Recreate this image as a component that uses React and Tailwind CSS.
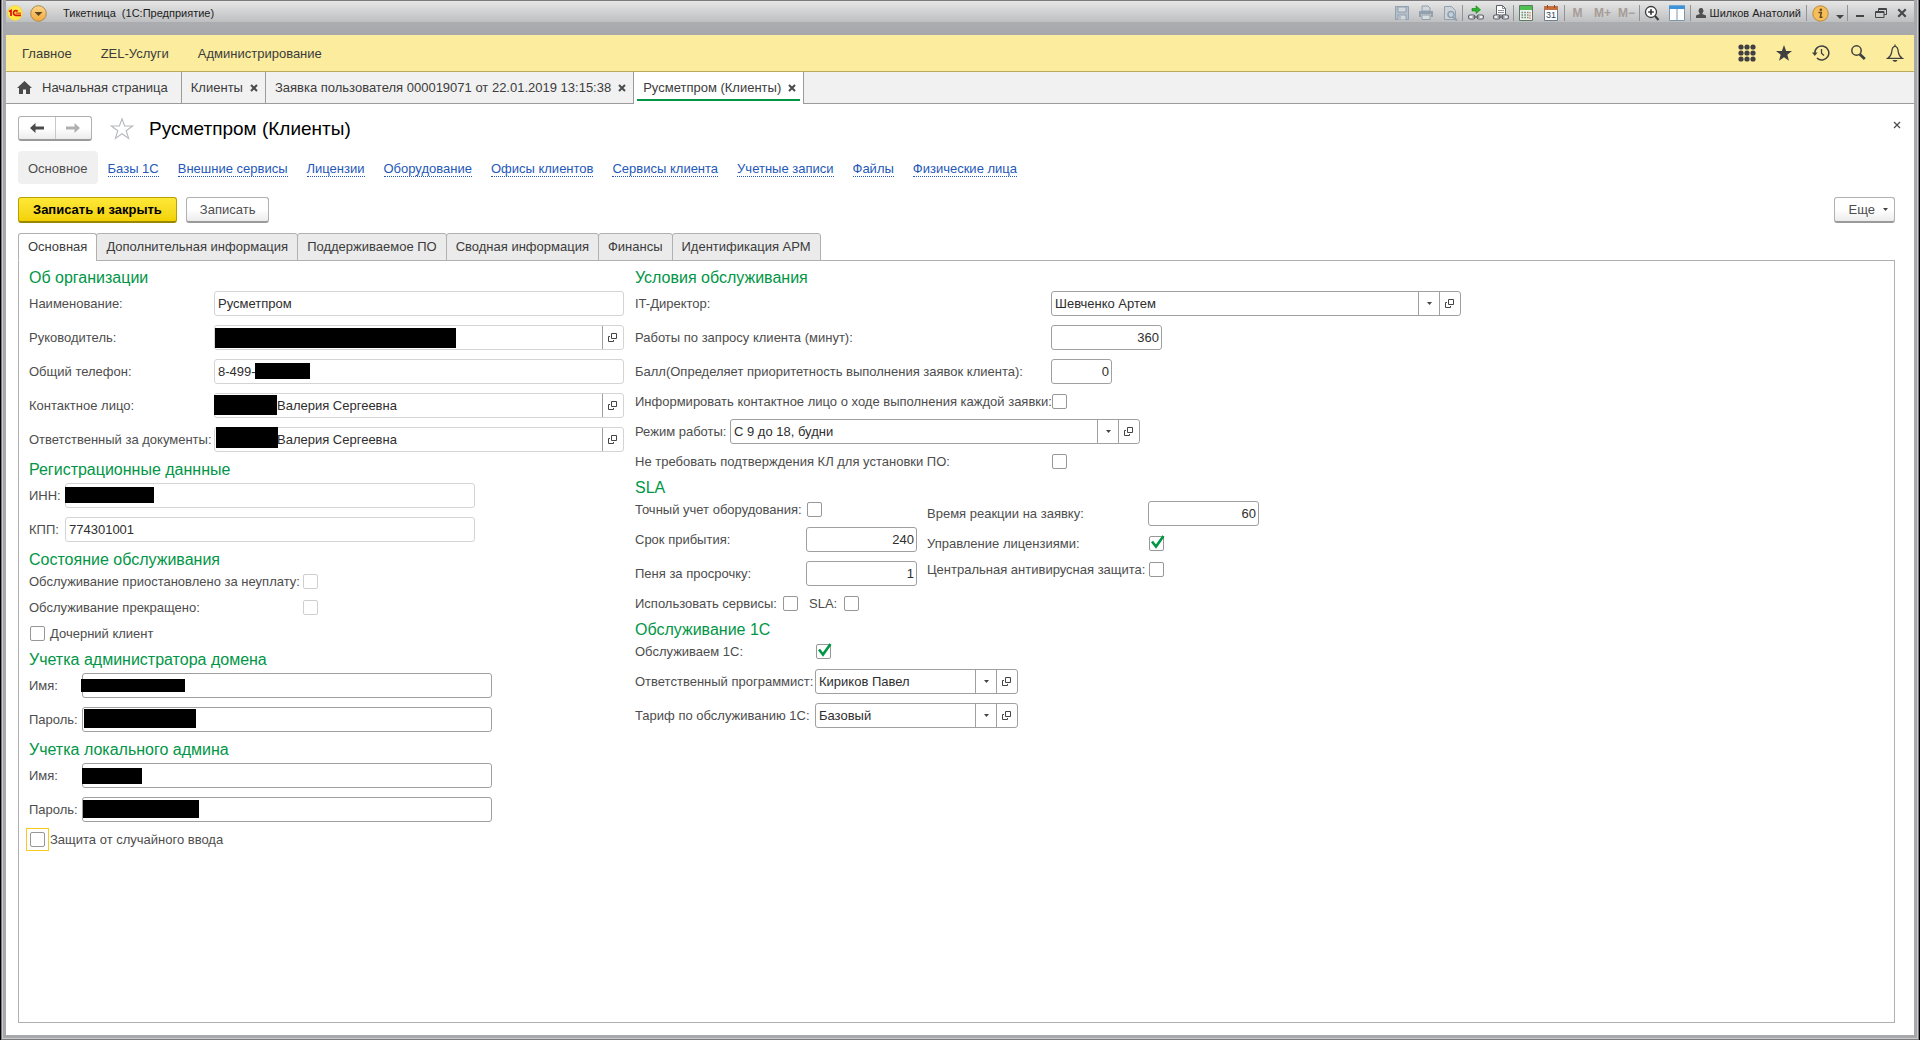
import React, { useState } from 'react';

const menuItems = ['Главное', 'ZEL-Услуги', 'Администрирование'];

const navLinks = [
    'Базы 1С', 'Внешние сервисы', 'Лицензии', 'Оборудование', 'Офисы клиентов',
    'Сервисы клиента', 'Учетные записи', 'Файлы', 'Физические лица',
];

const formTabs = [
    'Основная', 'Дополнительная информация', 'Поддерживаемое ПО',
    'Сводная информация', 'Финансы', 'Идентификация АРМ',
];

/* ---------- Icons ---------- */

const CloseIcon = ({ className = 'size-2', width = 2 }) => (
    <svg viewBox="0 0 8 8" className={className} fill="none" stroke="#4a4a4a" strokeWidth={width}>
        <path d="M1 1l6 6M7 1l-6 6" />
    </svg>
);

const CaretIcon = () => (
    <svg viewBox="0 0 5 3" className="h-[3px] w-[5px]" fill="#444"><path d="M0 0h5L2.5 3z" /></svg>
);

const OpenIcon = () => (
    <svg viewBox="0 0 10 10" className="size-[10px]" fill="none" stroke="#444">
        <path d="M3.500 .5h5v5h-5z" />
        <path d="M2 3.500H.5v5h5V7" />
    </svg>
);

const HomeIcon = () => (
    <svg viewBox="0 0 15 13" className="h-[13px] w-[15px]" fill="#4a4a4a">
        <path d="M7.500 0L15 7h-2v6H9V8.500H6V13H2V7H0z" />
    </svg>
);

const ArrowIcon = ({ flip, color }) => (
    <svg viewBox="0 0 14 10" className="h-[10px] w-[14px]" fill={color}>
        {flip ? <path d="M14 5L8.500 0v3.500H0v3h8.500V10z" /> : <path d="M0 5l5.500-5v3.500H14v3H5.500V10z" />}
    </svg>
);

const StarOutline = () => (
    <svg viewBox="0 0 24 24" className="size-6" fill="#fff" stroke="#b4b9be" strokeWidth="1.1">
        <path d="M12 1.800l2.600 7.200h8l-6.400 4.700 2.400 7.700L12 16.700l-6.600 4.700 2.400-7.700L1.400 9h8z" />
    </svg>
);

const LogoIcon = () => (
    <svg viewBox="0 0 16 16" className="size-4">
        <circle cx="8" cy="8" r="7.500" fill="#ffe94a" stroke="#e9c84a" strokeWidth=".6" />
        <g fill="none" stroke="#d8150f" strokeWidth="1.700">
            <path d="M2 6.600L4 5.500V11" />
            <path d="M10.600 6.600A2.300 2.300 0 1 0 8.800 10.300H14" />
            <path d="M8.600 8.100H14" strokeWidth="1" />
        </g>
    </svg>
);

const MenuCircleIcon = () => (
    <svg viewBox="0 0 17 17" className="size-[17px]">
        <defs>
            <linearGradient id="orange" x2="0" y2="1">
                <stop stopColor="#fbd68a" /><stop offset="1" stopColor="#f3a83c" />
            </linearGradient>
        </defs>
        <circle cx="8.500" cy="8.500" r="7.800" fill="url(#orange)" stroke="#a98a52" />
        <path d="M4.500 7h8l-4 4z" fill="#5a4420" />
    </svg>
);

const SaveIcon = () => (
    <svg viewBox="0 0 16 16" className="size-4" fill="none" stroke="#93a0ad">
        <path d="M1.500 1.500h13v13h-13z" fill="#b3bfca" />
        <path d="M4 2h8v5H4zM4 14.500V10h8v4.500M6 11v3" fill="#d3d8dd" />
    </svg>
);

const PrinterIcon = () => (
    <svg viewBox="0 0 16 16" className="size-4" fill="#93a0ad">
        <path d="M4 1h6l2 2v3H4z" fill="#d3d8dd" stroke="#93a0ad" />
        <path d="M1 6h14v6h-2V9H3v3H1z" />
        <path d="M4 10h8v4.500H4z" fill="#dadde0" stroke="#93a0ad" />
    </svg>
);

const PreviewIcon = () => (
    <svg viewBox="0 0 16 16" className="size-4" fill="none" stroke="#93a0ad">
        <path d="M2.500 1.500h7l4 4v9h-11z" fill="#cdd3d8" />
        <circle cx="9" cy="9.500" r="3" strokeWidth="1.600" fill="#c2d3e0" />
        <path d="M11 12l4 3.500" strokeWidth="2" />
    </svg>
);

const ChainShape = () => (
    <g fill="#eee" stroke="#5a6068" strokeWidth="1.200">
        <rect x=".6" y="10" width="6.200" height="4" rx="1.500" />
        <rect x="9.200" y="10" width="6.200" height="4" rx="1.500" />
        <path d="M4.500 12h7" />
    </g>
);

const LinkGoIcon = () => (
    <svg viewBox="0 0 16 16" className="size-4">
        <ChainShape />
        <path d="M4 3.500h4V.8l4.500 4L8 8.500V6H4z" fill="#2cb32c" stroke="#128012" strokeWidth=".6" />
    </svg>
);

const LinkPageIcon = () => (
    <svg viewBox="0 0 16 16" className="size-4">
        <path d="M3.500 .5h6l3 3v6.500h-9z" fill="#fff" stroke="#5a6068" />
        <path d="M9.500 .5v3h3M5 5.500h6M5 7.500h6" fill="none" stroke="#5a6068" strokeWidth=".7" />
        <ChainShape />
    </svg>
);

const CalcIcon = () => (
    <svg viewBox="0 0 14 16" className="h-4 w-[14px]">
        <path d="M.5 .5h13v15H.5z" fill="#eef3ee" stroke="#5d7a62" />
        <path d="M1 1h12v4H1z" fill="#4fc04f" />
        <g stroke="#6c8a70" strokeWidth="1.400" strokeDasharray="1.600 1.200">
            <path d="M2.500 7.500h7M2.500 10h7M2.500 12.500h7" />
        </g>
        <path d="M11 7v7" stroke="#e08070" strokeWidth="1.400" strokeDasharray="1.600 1.200" />
    </svg>
);

const CalendarIcon = () => (
    <svg viewBox="0 0 14 16" className="h-4 w-[14px]">
        <path d="M.5 1.500h13v14H.5z" fill="#fff" stroke="#6d7f92" />
        <path d="M0 1h14v4H0z" fill="#c46f3f" />
        <path d="M3.500 0v3M10.500 0v3" stroke="#8a4a28" />
        <text x="7" y="13" fontSize="9" textAnchor="middle" fill="#33475c" className="font-['Liberation_Sans']">31</text>
    </svg>
);

const ZoomIcon = () => (
    <svg viewBox="0 0 16 16" className="size-4" fill="none" stroke="#3c3c3c">
        <circle cx="7" cy="7" r="5.500" fill="#fff" strokeWidth="1.300" />
        <path d="M4.200 7h5.600M7 4.200v5.600" strokeWidth="1.700" />
        <path d="M11 11l3.500 4" strokeWidth="2" />
    </svg>
);

const PanelsIcon = () => (
    <svg viewBox="0 0 16 16" className="size-4">
        <path d="M.5 1h15v14.500H.5z" fill="#fff" stroke="#7c96ad" />
        <path d="M0 .5h16V4H0z" fill="#3e92d8" />
        <path d="M8 4v11.500" stroke="#7c96ad" />
    </svg>
);

const UserIcon = () => (
    <svg viewBox="0 0 10 10" className="size-[10px]" fill="#505050">
        <path d="M5 0a2.300 2.800 0 0 1 1.300 5.200v.8L10 7.500V10H0V7.500L3.700 6v-.8A2.300 2.800 0 0 1 5 0z" />
    </svg>
);

const InfoIcon = () => (
    <svg viewBox="0 0 17 17" className="size-[17px]">
        <circle cx="8.500" cy="8.500" r="7.700" fill="#f6bd58" stroke="#b58a3c" />
        <circle cx="8.900" cy="4.800" r="1.300" fill="#5c4a24" />
        <path d="M6.500 7.500h2.800L8.300 12.300h2.200" fill="none" stroke="#5c4a24" strokeWidth="1.500" />
    </svg>
);

const AppsIcon = () => (
    <svg viewBox="0 0 18 18" className="size-[18px]" fill="#404040">
        {[3, 9, 15].map((y) => [3, 9, 15].map((x) => <circle key={`${x}-${y}`} cx={x} cy={y} r="2.600" />))}
    </svg>
);

const StarIcon = () => (
    <svg viewBox="0 0 18 18" className="size-[18px]" fill="#404040">
        <path d="M9 1l2.100 5.900H17l-4.700 3.800 1.700 6L9 13.200l-5 3.500 1.700-6L1 6.900h5.900z" />
    </svg>
);

const HistoryIcon = () => (
    <svg viewBox="0 0 18 18" className="size-[18px]" fill="none" stroke="#404040" strokeWidth="1.500">
        <path d="M2.800 9a7 7 0 1 1 2.100 5" />
        <path d="M0 8.500h5.600L2.800 12z" fill="#404040" stroke="none" />
        <path d="M9.500 5v4.300l2.500 2.200" strokeWidth="1.300" />
    </svg>
);

const SearchIcon = () => (
    <svg viewBox="0 0 18 18" className="size-[18px]" fill="none" stroke="#404040">
        <circle cx="7.500" cy="6.500" r="4.700" strokeWidth="1.500" />
        <path d="M10.800 10.200l5 4.800" strokeWidth="2.800" />
    </svg>
);

const BellIcon = () => (
    <svg viewBox="0 0 18 18" className="size-[18px]" fill="none" stroke="#404040" strokeWidth="1.300">
        <path d="M9 .5V2M1.800 14.300c2.500-1.600 3.500-3.500 3.900-6.300C6 4.500 7 2.300 9 2.300S12 4.500 12.300 8c.4 2.800 1.400 4.700 3.900 6.300z" />
        <path d="M6.300 16h5.400L10 17.800H8z" fill="#404040" stroke="none" />
    </svg>
);

/* ---------- Window title bar ---------- */

const ToolButton = ({ label, className = 'w-6', children }) => (
    <button type="button" aria-label={label} className={`flex h-5 shrink-0 items-center justify-center ${className}`}>
        {children}
    </button>
);

const Separator = () => <span className="h-4 w-px shrink-0 bg-[#919396]" />;

const TitleBar = () => (
    <header className="h-[35px] bg-[#a9abae] bg-linear-to-b from-[#b5b5b8] to-[#a6a8ab]">
        <div className="flex h-[22px] items-center border-t border-[#7d7a7e] bg-linear-to-b from-[#e6e6e6] to-[#bebfc1] pt-[3px] pl-px text-[11px] text-[#1c1c1c]">
            <LogoIcon />
            <button type="button" aria-label="Меню" className="ml-[7px]"><MenuCircleIcon /></button>
            <span className="ml-1.5"><Separator /></span>
            <span className="ml-[10px] whitespace-pre">Тикетница  (1С:Предприятие)</span>
            <div className="ml-auto flex items-center">
                <ToolButton label="Сохранить"><SaveIcon /></ToolButton>
                <ToolButton label="Печать"><PrinterIcon /></ToolButton>
                <ToolButton label="Просмотр"><PreviewIcon /></ToolButton>
                <Separator />
                <ToolButton label="Перейти по ссылке" className="w-[26px]"><LinkGoIcon /></ToolButton>
                <ToolButton label="Получить ссылку"><LinkPageIcon /></ToolButton>
                <Separator />
                <ToolButton label="Калькулятор"><CalcIcon /></ToolButton>
                <ToolButton label="Календарь" className="w-[26px]"><CalendarIcon /></ToolButton>
                <Separator />
                <div className="flex text-center text-xs font-bold text-[#a79c96]">
                    <button type="button" className="w-[26px]">M</button>
                    <button type="button" className="w-6">M+</button>
                    <button type="button" className="w-6">M−</button>
                </div>
                <Separator />
                <ToolButton label="Масштаб"><ZoomIcon /></ToolButton>
                <ToolButton label="Панели" className="w-[26px]"><PanelsIcon /></ToolButton>
                <Separator />
                <button type="button" className="flex h-5 items-center gap-1 px-[5px]">
                    <UserIcon /> Шилков Анатолий
                </button>
                <Separator />
                <ToolButton label="О программе" className="w-[26px]"><InfoIcon /></ToolButton>
                <ToolButton label="Еще" className="w-[14px] pt-2">
                    <svg viewBox="0 0 8 4" className="h-1 w-2" fill="#444"><path d="M0 0h8L4 4z" /></svg>
                </ToolButton>
                <Separator />
                <ToolButton label="Свернуть" className="w-6 pt-1.5"><span className="h-0.5 w-2 bg-[#444]" /></ToolButton>
                <ToolButton label="Восстановить" className="w-[18px]">
                    <svg viewBox="0 0 12 10" className="h-[10px] w-3" fill="none" stroke="#444">
                        <path d="M3.500 3V.5h8v6H9M3.500 1.500h8" />
                        <path d="M.5 3.500H9v6H.5zM.5 4.500H9" />
                    </svg>
                </ToolButton>
                <ToolButton label="Закрыть окно"><CloseIcon className="size-[10px]" width={1.8} /></ToolButton>
            </div>
        </div>
    </header>
);

const SectionsBar = () => (
    <nav className="flex h-[37px] items-center justify-between border-b border-[#b9ab5c] bg-[#fbec9e] pl-4 pr-2.5">
        <div className="flex gap-[29px] pt-px">
            {menuItems.map((item) => <button key={item} type="button">{item}</button>)}
        </div>
        <div className="flex gap-[19px]">
            <button type="button" aria-label="Функции"><AppsIcon /></button>
            <button type="button" aria-label="Избранное"><StarIcon /></button>
            <button type="button" aria-label="История"><HistoryIcon /></button>
            <button type="button" aria-label="Поиск"><SearchIcon /></button>
            <button type="button" aria-label="Оповещения"><BellIcon /></button>
        </div>
    </nav>
);

const WindowTab = ({ title, active }) => (
    <div className={`relative flex items-center gap-[7px] border-r border-[#9b9b9b] pl-[9px] pr-[7px] ${active ? '-mb-px bg-white' : ''}`}>
        <button type="button">{title}</button>
        <button type="button" aria-label={`Закрыть ${title}`}><CloseIcon /></button>
        {active && <span className="absolute inset-x-[3px] bottom-[3px] h-0.5 bg-[#009646]" />}
    </div>
);

const WindowTabs = () => (
    <div className="flex h-8 border-b border-[#9b9b9b] bg-[#f1f1f1]">
        <button type="button" className="flex items-center gap-[10px] border-r border-[#9b9b9b] pl-[11px] pr-[13px]">
            <HomeIcon /> Начальная страница
        </button>
        <WindowTab title="Клиенты" />
        <WindowTab title="Заявка пользователя 000019071 от 22.01.2019 13:15:38" />
        <WindowTab title="Русметпром (Клиенты)" active />
    </div>
);

/* ---------- Form controls ---------- */

const Section = ({ title, children }) => (
    <section>
        <h2 className="mb-[3px] text-base leading-5 text-[#009646]">{title}</h2>
        <div className="flex flex-col gap-[9px]">{children}</div>
    </section>
);

const OpenButton = ({ label, border = 'border-[#a0a0a0]' }) => (
    <button type="button" aria-label={`Открыть: ${label}`} className={`flex w-[21px] shrink-0 items-center justify-center border-l ${border}`}>
        <OpenIcon />
    </button>
);

// mask: black bar that hides the private part of the value
const Field = ({ id, label, labelWidth, width = 'w-[410px]', value = '', pad = 'pl-[3px]', mask, open, soft, numeric, type = 'text' }) => (
    <div className="flex items-center">
        <label htmlFor={id} className={`shrink-0 ${labelWidth}`}>{label}</label>
        <div className={`relative flex h-[25px] rounded-[3px] border bg-white ${width} ${soft ? 'border-[#d4d4d4]' : 'border-[#a0a0a0]'}`}>
            <input id={id} type={type} defaultValue={value}
                className={`min-w-0 flex-1 bg-transparent pr-[2px] text-[#2e2e2e] outline-none ${pad} ${numeric ? 'text-right' : ''}`} />
            {open && <OpenButton label={label} />}
            {mask && <span className={`absolute bg-black ${mask}`} />}
        </div>
    </div>
);

const Combo = ({ id, label, labelWidth, width = 'w-[410px]', value }) => (
    <div className="flex items-center">
        <label htmlFor={id} className={`shrink-0 ${labelWidth}`}>{label}</label>
        <div className={`flex h-[25px] rounded-[3px] border border-[#a0a0a0] bg-white ${width}`}>
            <div className="relative flex flex-1">
                <select id={id} className="w-full appearance-none bg-transparent pl-[3px] text-[#2e2e2e] outline-none">
                    <option>{value}</option>
                </select>
                <span className="pointer-events-none absolute inset-y-0 right-0 flex w-[21px] items-center justify-center border-l border-[#a0a0a0]">
                    <CaretIcon />
                </span>
            </div>
            <OpenButton label={label} />
        </div>
    </div>
);

const CheckBox = ({ id, checked = false, soft }) => {
    const [on, setOn] = useState(checked);
    return (
        <span className="relative m-px flex size-[15px] shrink-0">
            <input id={id} type="checkbox" checked={on} onChange={(e) => setOn(e.target.checked)}
                className={`size-[15px] appearance-none rounded-[2px] border bg-white outline-none ${soft ? 'border-[#cfcfcf]' : 'border-[#979797]'}`} />
            {on && (
                <svg viewBox="0 0 16 16" className="pointer-events-none absolute -top-px left-px size-4" fill="none" stroke="#009646" strokeWidth="2.600">
                    <path d="M2 6.500l4 5L13.500 1" />
                </svg>
            )}
        </span>
    );
};

const CheckRow = ({ id, label, labelWidth, checked, soft }) => (
    <div className="flex h-[17px] items-center">
        <label htmlFor={id} className={`shrink-0 whitespace-nowrap ${labelWidth}`}>{label}</label>
        <CheckBox id={id} checked={checked} soft={soft} />
    </div>
);

/* ---------- Form columns ---------- */

const LeftColumn = () => (
    <div className="flex w-[606px] shrink-0 flex-col gap-2">
        <Section title="Об организации">
            <Field id="name" label="Наименование:" labelWidth="w-[185px]" value="Русметпром" soft />
            <Field id="head" label="Руководитель:" labelWidth="w-[185px]" open soft mask="left-0 top-[2px] h-5 w-[241px]" />
            <Field id="phone" label="Общий телефон:" labelWidth="w-[185px]" value="8-499-" soft mask="left-10 top-[3px] h-4 w-[55px]" />
            <Field id="contact" label="Контактное лицо:" labelWidth="w-[185px]" value="Валерия Сергеевна" pad="pl-[62px]" open soft mask="-left-px top-px h-5 w-[63px]" />
            <Field id="docs" label="Ответственный за документы:" labelWidth="w-[185px]" value="Валерия Сергеевна" pad="pl-[62px]" open soft mask="left-px -top-px h-[21px] w-[62px]" />
        </Section>
        <Section title="Регистрационные даннные">
            <Field id="inn" label="ИНН:" labelWidth="w-[36px]" soft mask="-left-px top-[3px] h-4 w-[89px]" />
            <Field id="kpp" label="КПП:" labelWidth="w-[36px]" value="774301001" soft />
        </Section>
        <Section title="Состояние обслуживания">
            <CheckRow id="paused" label="Обслуживание приостановлено за неуплату:" labelWidth="w-[273px]" soft />
            <CheckRow id="stopped" label="Обслуживание прекращено:" labelWidth="w-[273px]" soft />
            <div className="flex h-[17px] items-center gap-1">
                <CheckBox id="child" />
                <label htmlFor="child">Дочерний клиент</label>
            </div>
        </Section>
        <Section title="Учетка администратора домена">
            <Field id="domain-user" label="Имя:" labelWidth="w-[53px]" mask="-left-[2px] top-[5px] h-[13px] w-[104px]" />
            <Field id="domain-pass" label="Пароль:" labelWidth="w-[53px]" type="password" mask="left-px top-px h-[19px] w-[112px]" />
        </Section>
        <Section title="Учетка локального админа">
            <Field id="local-user" label="Имя:" labelWidth="w-[53px]" mask="-left-px top-1 h-4 w-[60px]" />
            <Field id="local-pass" label="Пароль:" labelWidth="w-[53px]" type="password" mask="left-0 top-[2px] h-[18px] w-[116px]" />
            <div className="flex h-[17px] items-center gap-1">
                <span className="outline outline-offset-2 outline-[#f7ca1b]"><CheckBox id="guard" /></span>
                <label htmlFor="guard">Защита от случайного ввода</label>
            </div>
        </Section>
    </div>
);

const RightColumn = () => (
    <div className="flex flex-col gap-2">
        <Section title="Условия обслуживания">
            <Combo id="director" label="IT-Директор:" labelWidth="w-[416px]" value="Шевченко Артем" />
            <Field id="minutes" label="Работы по запросу клиента (минут):" labelWidth="w-[416px]" width="w-[111px]" value="360" numeric />
            <Field id="score" label="Балл(Определяет приоритетность выполнения заявок клиента):" labelWidth="w-[416px]" width="w-[61px]" value="0" numeric />
            <CheckRow id="inform" label="Информировать контактное лицо о ходе выполнения каждой заявки:" labelWidth="w-[416px]" />
            <Combo id="mode" label="Режим работы:" labelWidth="w-[95px]" value="С 9 до 18, будни" />
            <CheckRow id="no-confirm" label="Не требовать подтверждения КЛ для установки ПО:" labelWidth="w-[416px]" />
        </Section>
        <Section title="SLA">
            <div className="flex">
                <div className="flex w-[292px] flex-col gap-[9px]">
                    <CheckRow id="exact" label="Точный учет оборудования:" labelWidth="w-[171px]" />
                    <Field id="arrival" label="Срок прибытия:" labelWidth="w-[171px]" width="w-[111px]" value="240" numeric />
                    <Field id="penalty" label="Пеня за просрочку:" labelWidth="w-[171px]" width="w-[111px]" value="1" numeric />
                    <div className="flex gap-[10px]">
                        <CheckRow id="services" label="Использовать сервисы:" labelWidth="w-[147px]" />
                        <CheckRow id="sla" label="SLA:" labelWidth="w-[34px]" />
                    </div>
                </div>
                <div className="flex flex-col gap-[9px]">
                    <Field id="reaction" label="Время реакции на заявку:" labelWidth="w-[221px]" width="w-[111px]" value="60" numeric />
                    <CheckRow id="licenses" label="Управление лицензиями:" labelWidth="w-[221px]" checked />
                    <CheckRow id="antivirus" label="Центральная антивирусная защита:" labelWidth="w-[221px]" />
                </div>
            </div>
        </Section>
        <Section title="Обслуживание 1С">
            <CheckRow id="serve" label="Обслуживаем 1С:" labelWidth="w-[180px]" checked />
            <Combo id="programmer" label="Ответственный программист:" labelWidth="w-[180px]" width="w-[203px]" value="Кириков Павел" />
            <Combo id="tariff" label="Тариф по обслуживанию 1С:" labelWidth="w-[180px]" width="w-[203px]" value="Базовый" />
        </Section>
    </div>
);

const plainButton = 'h-[26px] rounded-[3px] border border-[#b0b0b0] border-b-2 border-b-[#9a9a9a] bg-linear-to-b from-white from-50% to-[#ececec] text-[#4d4d4d]';

const FormHeader = () => (
    <>
        <div className="flex items-center">
            <div className="flex h-[25px] w-[74px] overflow-hidden rounded-[3px] border border-[#b0b0b0] border-b-2 border-b-[#9a9a9a] bg-linear-to-b from-white from-50% to-[#ececec]">
                <button type="button" aria-label="Назад" className="flex flex-1 items-center justify-center border-r border-[#c8c8c8]"><ArrowIcon color="#4a4a4a" /></button>
                <button type="button" aria-label="Вперед" className="flex flex-1 items-center justify-center"><ArrowIcon flip color="#b0b0b0" /></button>
            </div>
            <button type="button" aria-label="В избранное" className="ml-[18px]"><StarOutline /></button>
            <h1 className="ml-[15px] text-[19px] leading-6 text-black">Русметпром (Клиенты)</h1>
            <button type="button" aria-label="Закрыть" className="-mr-1.5 mb-2 ml-auto"><CloseIcon width={1.2} /></button>
        </div>
        <div className="mt-[10px] flex h-[33px] items-center">
            <span className="mr-[10px] flex h-full items-center rounded-[4px] bg-[#f0f0f0] px-[10px] pt-[2px]">Основное</span>
            <div className="flex gap-[19px] pt-[3px]">
                {navLinks.map((link) => (
                    <a key={link} href="#" className="border-b border-dotted border-[#2458b8] leading-[14px] text-[#2458b8]">{link}</a>
                ))}
            </div>
        </div>
        <div className="mt-[13px] flex gap-[9px]">
            <button type="button" className="h-[26px] rounded-[3px] border border-[#b8a000] border-b-2 border-b-[#9c8800] bg-linear-to-b from-[#ffe836] to-[#f2d200] px-[14px] font-bold text-black">
                Записать и закрыть
            </button>
            <button type="button" className={`${plainButton} px-[13px]`}>Записать</button>
            <button type="button" className={`${plainButton} ml-auto flex items-center gap-2 pl-[14px] pr-1.5`}>Еще <CaretIcon /></button>
        </div>
    </>
);

export default function App() {
    const [activeTab, setActiveTab] = useState('Основная');

    return (
        <div className="flex min-h-screen flex-col border-x-[1px] border-black bg-[#a6a8ab] font-['Liberation_Sans',Arial,sans-serif] text-[13px] leading-4 text-[#4d4d4d]">
            <div className="flex flex-1 flex-col border border-t-0 border-[#7d7a7e]">
                <div className="flex flex-1 flex-col border border-t-0 border-[#c9cacc] px-[3px] pb-[3px]">
                    <TitleBar />
                    <div className="flex flex-1 flex-col bg-white">
                        <div className="text-[#3c3c3c]">
                            <SectionsBar />
                            <WindowTabs />
                        </div>
                        <main className="flex flex-1 flex-col pt-3 pr-[19px] pb-3 pl-3">
                            <FormHeader />
                            <div role="tablist" className="relative z-10 mt-[10px] -mb-px flex">
                                {formTabs.map((tab) => (
                                    <button key={tab} type="button" role="tab" aria-selected={tab === activeTab} onClick={() => setActiveTab(tab)}
                                        className={`-mr-px h-7 rounded-t-[3px] border border-[#b0b0b0] px-[9px] text-[#3c3c3c] ${tab === activeTab ? 'border-b-white bg-white' : 'bg-[#ebebeb]'}`}>
                                        {tab}
                                    </button>
                                ))}
                            </div>
                            <div className="flex flex-1 border border-[#b0b0b0] pt-[7px] pl-[10px]">
                                <LeftColumn />
                                <RightColumn />
                            </div>
                        </main>
                    </div>
                </div>
            </div>
        </div>
    );
}
